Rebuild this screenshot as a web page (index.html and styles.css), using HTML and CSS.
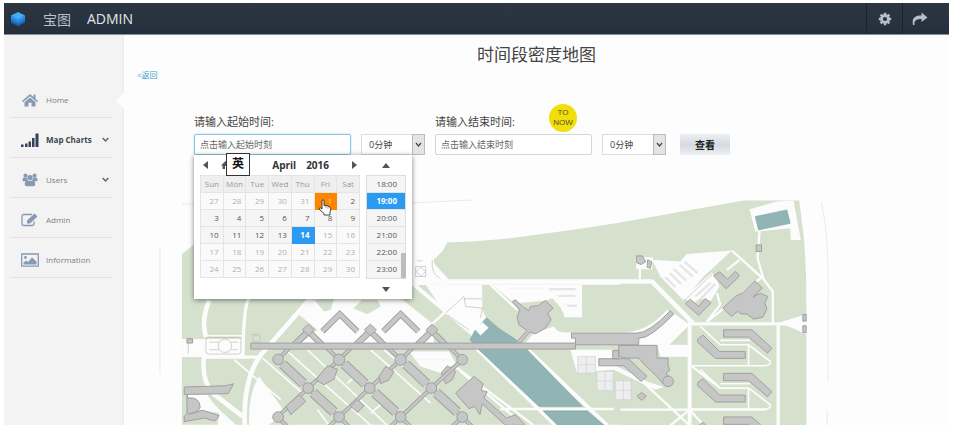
FILE: index.html
```html
<!DOCTYPE html>
<html lang="zh-CN">
<head>
<meta charset="utf-8">
<title>时间段密度地图</title>
<link rel="stylesheet" href="styles.css">
</head>
<body>
<div class="app">
  <header class="topbar">
    <a class="brand" href="#">
      <svg class="logo" viewBox="0 0 14 14" aria-hidden="true">
        <path d="M7 5.500 14 8v2.500L7 14 0 10.500V8z" fill="#1d62b4"/>
        <path d="M7 3 14 6v2.500L7 12 0 8.500V6z" fill="#2479d6"/>
        <path d="M7 0 14 3.500 7 7.500 0 3.500z" fill="#45adf8"/>
        <path d="M0 3.500 7 7.500 14 3.500V6L7 10 0 6z" fill="#3193ee"/>
      </svg>
      <span class="brand-cn">宝图</span><span>ADMIN</span>
    </a>
    <button class="top-button" type="button" aria-label="Settings">
      <svg viewBox="0 0 14 14" width="14" height="14"><circle cx="7" cy="7" r="3.500" fill="none" stroke="currentColor" stroke-width="2.800"/><path d="M7 0.800v2M7 11.200v2M.8 7h2M11.200 7h2M2.600 2.600 4 4M10 10l1.400 1.400M2.600 11.400 4 10M10 4l1.400-1.400" stroke="currentColor" stroke-width="2.400"/></svg>
    </button>
    <button class="top-button top-exit" type="button" aria-label="Log out">
      <svg viewBox="0 0 16 14" width="16" height="14"><path d="M1 13C-.5 6 3 3.500 9.500 3.500V.5L15.500 5.500 9.500 10V7C5 7 2 8 2.500 13z" fill="currentColor"/></svg>
    </button>
  </header>
  <div class="body">
    <nav class="sidebar">
      <a class="item current" href="#">
        <svg viewBox="0 0 18 14"><path d="M9 1 1 8l1 1.200L9 3.200l7 6L17 8l-2.500-2.200V1.500h-2V4zM9 4.500 3.500 9.200V13.500h4V9.800h3v3.700h4V9.200z"/></svg>
        <span>Home</span>
      </a>
      <a class="item strong" href="#">
        <svg viewBox="0 0 18 14"><path d="M0 11.500h2.500V14H0zM4 10.500h2.500V14H4zM7.500 8.500H10V14H7.500zM11 5h2.500v9H11zM14.500 0.500H17.500V14H14.500z"/></svg>
        <span>Map Charts</span>
        <svg class="chevron" viewBox="0 0 7 7"><path d="M.7 2 3.500 5 6.300 2"/></svg>
      </a>
      <a class="item" href="#">
        <svg viewBox="0 0 18 16"><circle cx="3.800" cy="3" r="2.300"/><circle cx="14.200" cy="3" r="2.300"/><path d="M.5 9.500V7Q.5 5 3 5.300l3 .7v3.500zM17.500 9.500V7q0-2-2.500-1.700l-3 .7v3.500z"/><circle cx="9" cy="5.200" r="3"/><path d="M3 13q0-4.500 3-4.800 3 1.600 6 0 3 .3 3 4.800 0 2-2 2H5q-2 0-2-2z"/></svg>
        <span>Users</span>
        <svg class="chevron" viewBox="0 0 7 7"><path d="M.7 2 3.500 5 6.300 2"/></svg>
      </a>
      <a class="item" href="#">
        <svg viewBox="0 0 18 14"><path class="line" d="M11 1.500H3Q1 1.500 1 3.500v7q0 2 2 2h8q2 0 2-2V8.500"/><path d="M6 10.500V7.500L13.500.5l3 3-7.500 7z"/></svg>
        <span>Admin</span>
      </a>
      <a class="item" href="#">
        <svg viewBox="0 0 18 14"><path class="line" d="M.7 1h16.600v12.200H.7z"/><circle cx="4.500" cy="4.500" r="1.400"/><path d="M2.500 11.500V9.500L5.500 7.500 7 9l4-4.500 4.500 4v3z"/></svg>
        <span>Information</span>
      </a>
    </nav>
    <main class="content">
      <h1>时间段密度地图</h1>
      <a class="back" href="#">&lt;返回</a>
      <form class="query">
        <div class="field">
          <div class="field-head"><label for="start">请输入起始时间:</label></div>
          <input id="start" class="focused" type="text" placeholder="点击输入起始时刻">
          <div class="picker">
            <div class="dates">
              <div class="picker-bar">
                <button type="button" aria-label="Previous month"><svg viewBox="0 0 6 8" width="6" height="8"><path d="M5 0v8L0 4z"/></svg></button>
                <button class="today" type="button" aria-label="Today"><svg viewBox="0 0 9 8" width="9" height="8"><path d="M4.500 0 0 4.500h1.500V8H4V5h1v3h2.500V4.500H9z"/></svg></button>
                <span class="month">April</span><span class="year">2016</span>
                <button type="button" aria-label="Next month"><svg viewBox="0 0 6 8" width="6" height="8"><path d="M1 0v8l5-4z"/></svg></button>
              </div>
              <table>
                <thead><tr><th>Sun</th><th>Mon</th><th>Tue</th><th>Wed</th><th>Thu</th><th>Fri</th><th>Sat</th></tr></thead>
                <tbody>
                  <tr><td class="off">27</td><td class="off">28</td><td class="off">29</td><td class="off">30</td><td class="off">31</td><td class="hover">1</td><td>2</td></tr>
                  <tr><td>3</td><td>4</td><td>5</td><td>6</td><td>7</td><td>8</td><td>9</td></tr>
                  <tr><td>10</td><td>11</td><td>12</td><td>13</td><td class="chosen">14</td><td class="off">15</td><td class="off">16</td></tr>
                  <tr><td class="off">17</td><td class="off">18</td><td class="off">19</td><td class="off">20</td><td class="off">21</td><td class="off">22</td><td class="off">23</td></tr>
                  <tr><td class="off">24</td><td class="off">25</td><td class="off">26</td><td class="off">27</td><td class="off">28</td><td class="off">29</td><td class="off">30</td></tr>
                </tbody>
              </table>
            </div>
            <div class="times">
              <button class="step" type="button" aria-label="Earlier"><svg viewBox="0 0 8 5" width="8" height="5"><path d="M0 5h8L4 0z"/></svg></button>
              <ul>
                <li>18:00</li><li class="chosen">19:00</li><li>20:00</li><li>21:00</li><li>22:00</li><li>23:00</li>
              </ul>
              <button class="step" type="button" aria-label="Later"><svg viewBox="0 0 8 5" width="8" height="5"><path d="M0 0h8L4 5z"/></svg></button>
            </div>
            <span class="ime">英</span>
            <svg class="pointer" viewBox="0 0 14 17" aria-hidden="true"><path d="M4 10V2Q4 .7 5 .7T6 2v4.500q3-.5 6 1.500 1 .7.700 3L12 13v3H6v-1.500L1 10q0-1.500 1.500-1z" fill="#fff" stroke="#333" stroke-width=".9"/><path d="M8 7v2M10 7.500v2" stroke="#666" stroke-width=".6"/></svg>
          </div>
        </div>
        <div class="select">
          <select aria-label="起始分钟"><option>0分钟</option></select>
          <span class="drop"><svg viewBox="0 0 7 7"><path d="M1 2 3.500 5 6 2"/></svg></span>
        </div>
        <div class="field">
          <div class="field-head"><label for="end">请输入结束时间:</label><button class="now" type="button">TO<br>NOW</button></div>
          <input id="end" type="text" placeholder="点击输入结束时刻">
        </div>
        <div class="select">
          <select aria-label="结束分钟"><option>0分钟</option></select>
          <span class="drop"><svg viewBox="0 0 7 7"><path d="M1 2 3.500 5 6 2"/></svg></span>
        </div>
        <button class="submit" type="submit">查看</button>
      </form>
      <svg class="map" viewBox="123 157 826 268" role="img" aria-label="Campus map">
        <defs>
          <path id="spokes" d="M320 240 412 325 505 412 597 500M505 240 597 325 690 412 782 500M690 240 782 325 875 412 967 500M320 412 412 500M412 150 505 240M597 150 690 240M782 150 875 240M412 150 320 240M597 150 505 240 412 325 320 412M782 150 690 240 597 325 505 412 412 500M875 240 782 325 690 412 597 500M875 412 782 500"/>
          <path id="wings" d="M335 253 398 312M427 339 490 397M520 253 583 312M612 339 675 397M705 253 768 312M797 339 860 397"/>
          <path id="gables" d="M455 155 507 103 560 155M638 155 690 103 743 155M380 188 413 155 446 188M565 188 599 155 633 188M750 188 784 155 818 188"/>
          <g id="dorms">
            <path d="M310 450H395L455 505 442 520 385 472H310zM232 478 248 466 298 515H375V536H286L232 487z"/>
          </g>
          <g id="dorm-paths"><path d="M240 440 300 495H385L450 545Q452 557 435 558H215M300 482H390M385 495V558"/></g>
        </defs>
        <g class="trace">
          <path d="M159 248V374M411 203 472 200M821 202Q829 235 828 300V382M827 410V425"/>
          <path d="M181 204H194"/>
        </g>
        <!-- lawns -->
        <path class="lawn" d="M181 254 195 243H330L412 285H655L806 300V425H181z"/>
        <!-- east side -->
        <g transform="translate(620 180) scale(.33333)">
          <path class="lawn" d="M-515 300-560 250V238L-535 215-520 188Q-440 185-360 178-200 160 0 128L370 62H537L552 180 558 290V737H0V300z"/>
          <path class="ground" d="M95 240 180 245 200 222 335 212 250 290 190 362 120 290zM388 88 470 65 520 62 542 180H512L510 145 405 155zM480 427 558 403V463L500 438z"/>
          <path class="road r14" d="M-660 305H95L218 430"/>
          <path class="road r12" d="M208 420V737"/>
          <path class="road r10" d="M215 432H510M474 435V737"/>
          <path class="road r8" d="M262 425 425 292M335 212 430 298 458 335V430M430 298 412 235 418 150M0 690H440M215 560 300 625M60 600 208 737M208 690 250 737M260 425 300 375 290 340M320 270 358 240M150 737 208 690"/>
          <path class="ground" d="M60 495 160 400 208 435 145 497H208V530H125V495zM45 232H98L95 268H48zM55 268H62V300H55z"/>
          <path class="lots" d="M135 292 165 322M148 280 182 312M160 268 198 302M178 255 218 290M192 245 232 280" />
          <g class="road r6"><use href="#dorm-paths"/><use href="#dorm-paths" y="130"/></g>
          <path class="ground" d="M188 355 275 278 290 300 298 320 272 362 240 355 220 370z"/>
          <path class="lots" d="M225 350 272 308M240 358 285 312"/>
          <path class="thin" d="M192 362 276 283"/>
          <path class="water" d="M405 110 500 90 510 130 415 150z"/>
          <g class="built">
            <path d="M280 288 298 276 322 298 346 274 358 288 318 327zM195 372 210 358 235 380 255 356 272 370 235 406zM308 385 345 350 368 338 405 303 426 325 398 352 420 340 442 350 434 370 440 388 428 412 400 418 380 403 362 402 352 395 333 410zM408 195H424V215H408zM548 404H558V424H548zM548 438H558V458H548zM82 240 94 246 90 265 80 262z"/>
            <path d="M48 228H66L76 246 62 254 48 248z"/>
            <use href="#dorms"/><use href="#dorms" y="131"/><use href="#dorms" y="262"/>
          </g>
        </g>
        <!-- central quarter -->
        <g transform="translate(400 180) scale(.33333)">
          <path class="ground" d="M35 275H90L125 310 35 318zM75 315H245V390L260 420 215 460 130 395zM275 315H545V412H492Q488 385 455 355L435 362 350 370 335 365zM375 490 400 460 460 440Q470 460 500 458H660Q740 460 800 390L830 420 720 497zM510 510H640L660 535H600L740 605 790 622 765 630 640 570 530 580zM0 395 90 470 40 495 0 470zM25 515H145L165 550 120 580 60 560zM770 495H860V530H780z"/>
          <path class="trace" d="M325 325H435M440 330H530M465 348H530M485 375H530M40 540H150"/>
          <path class="road r12" d="M222 500 465 737M372 500 620 737M35 310 225 470"/>
          <path class="road r8" d="M75 450 190 345M120 310 230 410M270 315 350 390M150 550 400 737M180 575 370 737M300 688H640"/>
          <path class="water" d="M208 480 225 450 258 414 300 450 340 475 375 505 545 680H415L235 510zM428 694H560L612 737H472z"/>
          <path class="ground" d="M222 448 246 427 264 444 240 467z"/>
          <path class="thin" d="M135 400 190 350 195 380 245 385 240 415M190 357H245M95 240Q90 285 120 296M205 450 140 405M265 425 310 455M45 260H75V290H45zM60 262 75 275 60 290 47 275zM50 243H65"/>
          <path class="lots" d="M445 328H525M475 348H525M500 378H530"/>
          <g class="courts"><path d="M532 530H585V580H532zM590 575H638V632H590zM645 603H692V660H645zM558 530V580M532 555H585M614 575V632M590 604H638M669 603V660M645 632H692"/></g>
          <g class="built">
            <path d="M513 460H710Q745 460 810 393L820 403Q750 475 720 475H715V495H525V475H513zM655 497H770V535H803V555L808 572 797 580 812 598 788 612 770 590 735 558 715 535H675L655 530zM637 512H655V537H637zM595 537H685L740 590 722 605 670 558H595zM710 650 724 638 738 650 724 662z"/>
            <path d="M335 365 345 360 368 382 385 392 390 380 412 378 435 362 458 385 442 400 452 420 435 445 405 462 388 457 360 490H345L380 452 355 435 350 410 358 390z"/>
            <path d="M165 640 220 590 248 612 242 632 260 636 250 655 318 715 345 705 375 737H315L245 672 238 705 222 680 205 687z"/>
            <circle cx="803" cy="605" r="16"/>
            <path d="M122 580 140 558 165 575 155 600 135 612z"/>
          </g>
        </g>
        <!-- west side and teaching blocks -->
        <g transform="translate(170 280) scale(.33333)">
          <path class="ground" d="M32 178H220V232H32zM385 105 430 55H690L790 135V190H390L440 150zM45 345 110 345Q125 375 190 430L220 470H135L145 400 80 390zM235 445Q230 340 265 290L345 400 280 445z"/>
          <path class="lawn" d="M430 60 490 55 480 90 460 95zM548 85 575 60H620L630 80 590 103z"/>
          <path class="road r14" d="M420 55 270 225Q215 300 222 440M115 62Q90 120 105 172M100 225Q90 300 125 340L215 410"/>
          <path class="road r10" d="M235 55Q218 75 216 235M105 232H270"/>
          <path class="road r6" d="M110 168H215M190 240 330 360M275 235 400 345M345 210 600 437M410 210 650 437M545 275 700 420M600 210 780 370M640 210 790 340M60 190V220M440 390 475 437M600 400 630 375M530 310 560 285"/>
          <path class="ground" d="M430 165 507 95 580 165 597 145 690 95 760 165V190H430z"/>
          <g class="thin"><rect x="105" y="173" width="105" height="50" rx="8"/><circle cx="162" cy="198" r="20"/><path d="M115 187H145M115 210H145M180 187H202M180 210H202M52 190V222M240 165 258 165"/><circle cx="257" cy="175" r="12"/></g>
          <g class="edge"><use href="#spokes" stroke-width="12"/><use href="#gables" stroke-width="18"/><use href="#wings" stroke-width="30"/></g>
          <g class="fill"><use href="#spokes" stroke-width="7"/><use href="#gables" stroke-width="12"/><use href="#wings" stroke-width="24"/></g>
          <g class="built">
            <path d="M48 177H65V190H48zM40 322 165 318 188 312 172 342 50 344V355Q85 350 88 382 80 402 52 403L95 392 145 408 132 424 100 415 40 426V410L48 402V344H40zM435 300 470 258 500 268 490 298 460 315zM625 290 645 260 670 275 655 300 630 312zM345 380 385 345 405 365 360 405zM540 380 560 360 580 378 560 398z"/>
            <path d="M240 190H1215V208H240zM395 150 413 133 431 150 413 168zM581 150 599 133 617 150 599 168zM766 150 784 133 802 150 784 168z"/>
            <circle cx="322" cy="239" r="16"/><circle cx="505" cy="240" r="17"/><circle cx="690" cy="240" r="17"/><circle cx="875" cy="240" r="16"/><circle cx="412" cy="325" r="16"/><circle cx="597" cy="325" r="16"/><circle cx="782" cy="325" r="16"/><circle cx="322" cy="412" r="16"/><circle cx="505" cy="412" r="16"/><circle cx="690" cy="412" r="16"/><circle cx="875" cy="412" r="16"/>
          </g>
        </g>
      </svg>
    </main>
  </div>
</div>
</body>
</html>
```

FILE: styles.css
```css
* { box-sizing: border-box; }

body {
  margin: 0;
  padding: 3px 4px 11px;
  background: #fff;
  color: #444;
  font-family: "Open Sans", "Noto Sans CJK SC", sans-serif;
  font-size: 9px;
}

a { color: inherit; text-decoration: none; }
button, input, select { font: inherit; color: inherit; }
button { padding: 0; border: 0; background: none; }
svg { display: block; }

.topbar {
  display: flex;
  height: 32px;
  background: linear-gradient(#2c3742, #232f3c);
  border-bottom: 1px solid #8b9096;
  color: #b4bfca;
}
.brand {
  display: flex;
  flex: 1;
  align-items: center;
  padding-left: 7px;
  color: #e4e7ea;
  font-size: 14px;
}
.logo { width: 14px; height: 14px; }
.brand-cn { margin: 0 16px 0 18px; color: #b9c0c7; }
.top-button {
  display: flex;
  width: 36px;
  align-items: center;
  justify-content: center;
  border-left: 1px solid #1a232c;
}
.top-exit { width: 47px; justify-content: flex-start; padding-left: 9px; }

.body { display: flex; }
.sidebar {
  width: 120px;
  flex: none;
  padding: 43px 11px 0 6px;
  background: #f3f3f3;
  border-right: 1px solid #ebebeb;
}
.item {
  position: relative;
  display: flex;
  height: 40px;
  align-items: center;
  padding: 4px 3px 0 11px;
  border-bottom: 1px solid #e3e3e3;
  color: #77828f;
  font-size: 8px;
}
.item svg { width: 18px; height: 14px; margin-right: 7px; fill: #8799b3; }
.item .line { fill: none; stroke: #8799b3; stroke-width: 1.3; }
.item.strong { color: #3f4650; font-weight: 700; }
.item.strong svg { fill: #34425a; }
.item .chevron {
  width: 7px;
  height: 7px;
  margin: 0 0 0 auto;
  fill: none;
  stroke: #666;
  stroke-width: 1.5;
}
.item.strong .chevron { fill: none; }
.current::after {
  content: "";
  position: absolute;
  top: 15px;
  right: -12px;
  border: 8px solid transparent;
  border-right-color: #fdfdfd;
  border-left: 0;
}

.content { flex: 1; min-width: 0; background: #fdfdfd; }
h1 {
  margin: 0;
  padding-top: 8px;
  font-size: 17px;
  font-weight: 400;
  line-height: 24px;
  text-align: center;
}
.back {
  display: block;
  width: fit-content;
  margin-left: 13px;
  color: #3b9cc9;
  font-size: 8px;
  line-height: 16px;
}

.query {
  display: flex;
  align-items: flex-end;
  gap: 10px;
  padding: 21px 0 0 70px;
}
.field { position: relative; width: 157px; }
.field-head {
  display: flex;
  height: 30px;
  align-items: flex-start;
  justify-content: space-between;
  padding-right: 15px;
  font-size: 11px;
  line-height: 36px;
}
.now {
  width: 28px;
  height: 28px;
  border-radius: 50%;
  background: #f0df0c;
  color: #5a5420;
  font-family: "Liberation Sans", sans-serif;
  font-size: 8px;
  line-height: 10px;
}
.field input {
  display: block;
  width: 100%;
  height: 21px;
  padding: 0 5px;
  border: 1px solid #d4d4d4;
  border-radius: 2px;
  background: #fff;
}
.field input::placeholder { color: #666; opacity: 1; }
.field input.focused { border-color: #8cc6e6; box-shadow: 0 0 2px #a9d8f0; }

.select { position: relative; width: 64px; }
select {
  display: block;
  width: 100%;
  height: 21px;
  padding: 0 7px;
  appearance: none;
  border: 1px solid #ddd;
  border-radius: 0;
  background: #fff;
}
.drop {
  position: absolute;
  top: 0;
  right: 0;
  display: grid;
  width: 13px;
  height: 21px;
  place-items: center;
  border: 1px solid #bbb;
  background: #e4e4e4;
  pointer-events: none;
}
.drop svg { width: 7px; height: 7px; fill: none; stroke: #444; stroke-width: 1.2; }
.submit {
  width: 50px;
  height: 21px;
  margin-left: 4px;
  background: linear-gradient(#edf0f3, #d5dae0 50%, #edf0f3);
  color: #222;
  font-size: 10px;
  font-weight: 700;
}

.picker {
  position: absolute;
  z-index: 2;
  top: 51px;
  left: 0;
  display: flex;
  gap: 6px;
  padding: 0 6px;
  background: #fff;
  box-shadow: 0 1px 5px rgba(0, 0, 0, .5);
  color: #555;
  font-size: 8px;
}
.picker svg { fill: #555; }
.picker-bar {
  display: flex;
  height: 20px;
  align-items: center;
  padding: 0 3px;
  color: #333;
  font-size: 10px;
  font-weight: 700;
}
.today { margin-left: 12px; }
.month { margin-left: auto; }
.year { margin: 0 22px 0 10px; }
table { width: 160px; border-collapse: collapse; table-layout: fixed; }
th, td {
  height: 17px;
  padding: 0;
  border: 1px solid #e4e4e4;
  line-height: 12px;
}
th { background: #efefef; color: #999; font-weight: 400; }
td { padding-right: 4px; background: #f5f5f5; text-align: right; }
td.off { background: #fafafa; color: #b0b0b0; }
td.hover { background: #ff8500; border-color: #ff8500; color: #ffd0a0; }
td.chosen { background: #2a9af3; border-color: #2a9af3; color: #fff; font-weight: 700; }
.times { position: relative; width: 40px; }
.step { display: grid; width: 100%; height: 20px; place-items: center; }
ul { margin: 0; padding: 0; border: 1px solid #ddd; list-style: none; }
li {
  height: 17px;
  padding-right: 8px;
  border-bottom: 1px solid #e2e2e2;
  background: #f5f5f5;
  line-height: 16px;
  text-align: right;
}
li:last-child { border-bottom: 0; }
li.chosen { background: #2a9af3; color: #fff; font-weight: 700; }
.times::after {
  content: "";
  position: absolute;
  right: 0;
  bottom: 21px;
  width: 5px;
  height: 25px;
  background: #bcbcbc;
}
.ime {
  position: absolute;
  top: -2px;
  left: 32px;
  width: 24px;
  height: 23px;
  border: 1px solid #333;
  background: #fff;
  color: #111;
  font-size: 12px;
  font-weight: 700;
  line-height: 20px;
  text-align: center;
}
.picker .pointer { position: absolute; top: 44px; left: 124px; width: 14px; height: 17px; }

.map { width: 100%; margin-top: 2px; }
.lawn { fill: #d5e0cd; }
.ground { fill: #fcfcfc; }
.water { fill: #91b4b5; stroke: #84a6a8; stroke-width: 2; }
.road { fill: none; stroke: #fcfcfc; stroke-linejoin: round; }
.r14 { stroke-width: 14px; }
.r12 { stroke-width: 12px; }
.r10 { stroke-width: 10px; }
.r8 { stroke-width: 7px; }
.r6 { stroke-width: 5px; }
.trace { fill: none; stroke: #e9e9e9; stroke-width: 1; }
.thin { fill: none; stroke: #bbb; stroke-width: 2; }
.lots { fill: none; stroke: #e6e6e6; stroke-width: 7; }
.courts { fill: #eee; stroke: #d2d2d2; stroke-width: 2; }
.built { fill: #c6c6c6; stroke: #a0a0a0; stroke-width: 3; }
.edge { fill: none; stroke: #a0a0a0; }
.fill { fill: none; stroke: #c8c8c8; }
```
